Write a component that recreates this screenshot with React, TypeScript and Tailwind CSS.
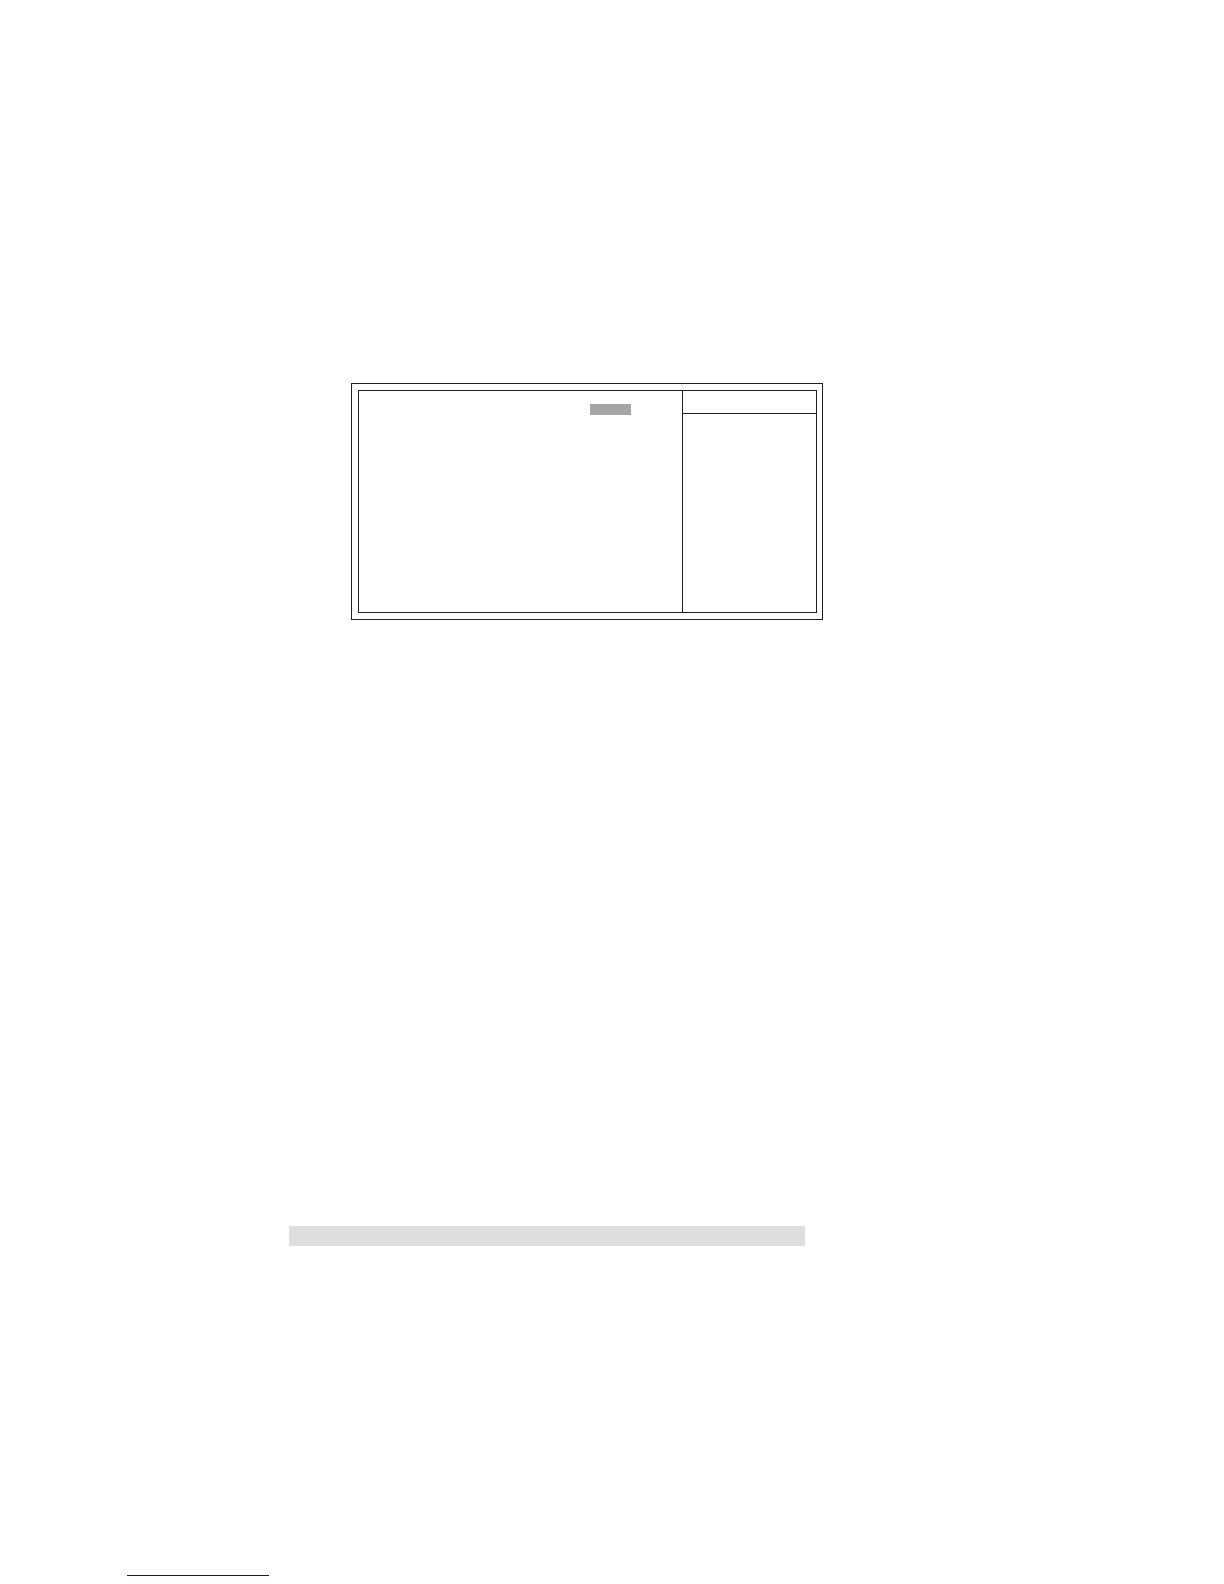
export default function App() {
  return (
    <main className="flex min-h-screen flex-col bg-white pt-[383px]">
      {/* Setup screen frame: option list on the left, help column on the right */}
      <div className="grid grid-cols-[351fr_472fr_401fr]">
        <section className="col-start-2 border border-[#231f20] py-1.5 pr-[5px] pl-1.5">
          <div className="grid min-h-[223px] grid-cols-[323fr_134fr] border border-[#231f20]">
            <div className="flex justify-end pt-[13px] pr-[51px]">
              <div className="h-[11px] w-[41px] bg-[#a5a5a5]" />
            </div>
            <aside className="border-l border-[#231f20]">
              <div className="h-[23px] border-b border-[#231f20]" />
            </aside>
          </div>
        </section>
      </div>

      {/* Shaded heading band */}
      <div className="mt-[606px] grid grid-cols-[289fr_516fr_419fr]">
        <div className="col-start-2 h-5 bg-[#dedede]" />
      </div>

      {/* Footer rule */}
      <footer className="mt-auto grid grid-cols-[127fr_142fr_955fr] pb-2">
        <div className="col-start-2 h-px bg-[#10108c]" />
      </footer>
    </main>
  );
}
